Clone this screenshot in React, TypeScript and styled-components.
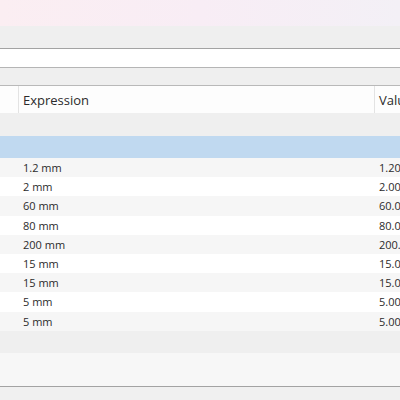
import React from 'react';
import styled, { createGlobalStyle } from 'styled-components';

const GlobalStyle = createGlobalStyle`
	html, body {
		margin: 0;
		padding: 0;
		background: #f0f0f0;
		overflow: hidden;
	}
	body {
		font-family: 'Segoe UI', 'Open Sans', 'Noto Sans', sans-serif;
		color: #2b2b2b;
	}
`;

const Page = styled.div`
	display: flex;
	flex-direction: column;
	width: 400px;
	height: 400px;
	overflow: hidden;
`;

const TitleBar = styled.div`
	height: 26px;
	background: linear-gradient(90deg, #fbeef2 0%, #f8edf5 50%, #f3f0f6 100%);
`;

const Toolbar = styled.div`
	height: 22px;
	background: #efefef;
	border-bottom: 1px solid #a3a3a3;
`;

const SearchField = styled.div`
	height: 18px;
	background: #ffffff;
	border-bottom: 1px solid #b5b5b5;
`;

const FilterBar = styled.div`
	height: 17px;
	background: #efefef;
	border-bottom: 1px solid #b9b9b9;
`;

const Columns = `
	display: grid;
	grid-template-columns: 19px 356px 1fr;
`;

const HeaderRow = styled.div`
	${Columns}
	height: 27px;
	background: #fdfdfd;
`;

const HeaderCell = styled.div<{ divider?: boolean }>`
	display: flex;
	align-items: center;
	padding-left: 4px;
	font-size: 13px;
	white-space: nowrap;
	overflow: hidden;
	border-right: ${(p) => (p.divider ? '1px solid #e3e3e3' : 'none')};
`;

const Band = styled.div<{ h: number; bg: string }>`
	height: ${(p) => p.h}px;
	background: ${(p) => p.bg};
`;

const DataRow = styled.div<{ alt: boolean }>`
	${Columns}
	height: 19.2px;
	background: ${(p) => (p.alt ? '#f6f6f6' : '#ffffff')};
`;

const Cell = styled.div`
	display: flex;
	align-items: center;
	padding-left: 4px;
	font-size: 11px;
	white-space: nowrap;
	overflow: hidden;
`;

const BottomLine = styled.div`
	height: 1px;
	background: #a3a3a3;
`;

const rows = [
	['1.2 mm', '1.20 mm'],
	['2 mm', '2.00 mm'],
	['60 mm', '60.00 mm'],
	['80 mm', '80.00 mm'],
	['200 mm', '200.00 mm'],
	['15 mm', '15.00 mm'],
	['15 mm', '15.00 mm'],
	['5 mm', '5.00 mm'],
	['5 mm', '5.00 mm'],
];

export default function App() {
	return (
		<Page>
			<GlobalStyle />
			<TitleBar />
			<Toolbar />
			<SearchField />
			<FilterBar />
			<HeaderRow>
				<HeaderCell divider />
				<HeaderCell divider>Expression</HeaderCell>
				<HeaderCell>Value</HeaderCell>
			</HeaderRow>
			<Band h={23} bg="#efefef" />
			<Band h={22} bg="#c0d9f0" />
			{rows.map(([expr, value], i) => (
				<DataRow key={i} alt={i % 2 === 0}>
					<Cell />
					<Cell>{expr}</Cell>
					<Cell>{value}</Cell>
				</DataRow>
			))}
			<Band h={22} bg="#efefef" />
			<Band h={33} bg="#f7f7f7" />
			<BottomLine />
		</Page>
	);
}
